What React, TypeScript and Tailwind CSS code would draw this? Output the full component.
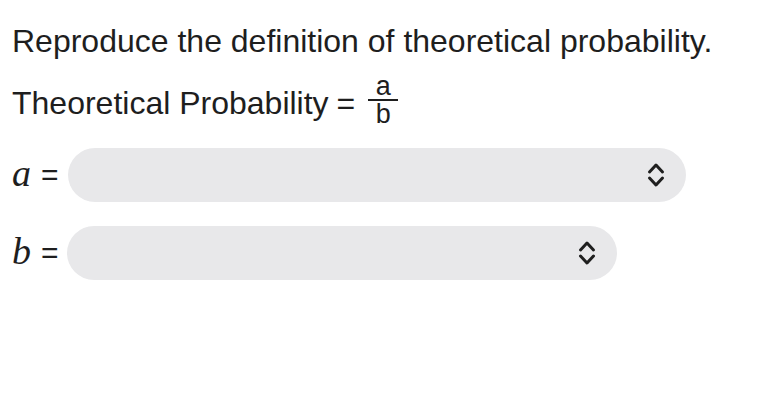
import React from "react";

function Chevrons() {
  return (
    <svg width="18" height="28" viewBox="0 0 18 28" fill="none" stroke="#1f1f1f" strokeWidth="3" strokeLinecap="round" strokeLinejoin="round">
      <path d="M2.5 11 L9 4 L15.5 11" />
      <path d="M2.5 17 L9 24 L15.5 17" />
    </svg>
  );
}

function Select({ width }: { width: string }) {
  return (
    <div className={`${width} h-[54px] rounded-full bg-[#e8e8ea] flex items-center justify-end pr-[21px]`}>
      <Chevrons />
    </div>
  );
}

export default function App() {
  return (
    <div className="w-[776px] h-[420px] bg-white text-[#1e1e1e] font-['Liberation_Sans',Arial,sans-serif] pl-3 pt-[23px]">
      <p className="text-[32px] leading-[37px]">Reproduce the definition of theoretical probability.</p>
      <div className="flex items-center mt-[11px] h-[60px]">
        <span className="text-[32px] leading-[37px] mt-[4px]">Theoretical Probability</span>
        <span className="text-[32px] leading-[37px] mt-[4px] ml-[8px]">=</span>
        <span className="inline-flex flex-col items-center ml-[13px] mt-[-2px]">
          <span className="text-[27px] leading-[24px]">a</span>
          <span className="w-[30px] h-[2px] bg-[#1e1e1e] mt-[1px]"></span>
          <span className="text-[27px] leading-[26px]">b</span>
        </span>
      </div>
      <div className="flex items-center mt-[17px]">
        <span className="w-[56px] flex items-center">
          <span className="font-['Liberation_Serif',serif] italic text-[38px] leading-none mt-[-4px]">a</span>
          <span className="text-[30px] leading-none ml-[10px]">=</span>
        </span>
        <Select width="w-[618px]" />
      </div>
      <div className="flex items-center mt-[24px]">
        <span className="w-[55px] flex items-center">
          <span className="font-['Liberation_Serif',serif] italic text-[38px] leading-none mt-[-4px]">b</span>
          <span className="text-[30px] leading-none ml-[10px]">=</span>
        </span>
        <Select width="w-[550px]" />
      </div>
    </div>
  );
}
